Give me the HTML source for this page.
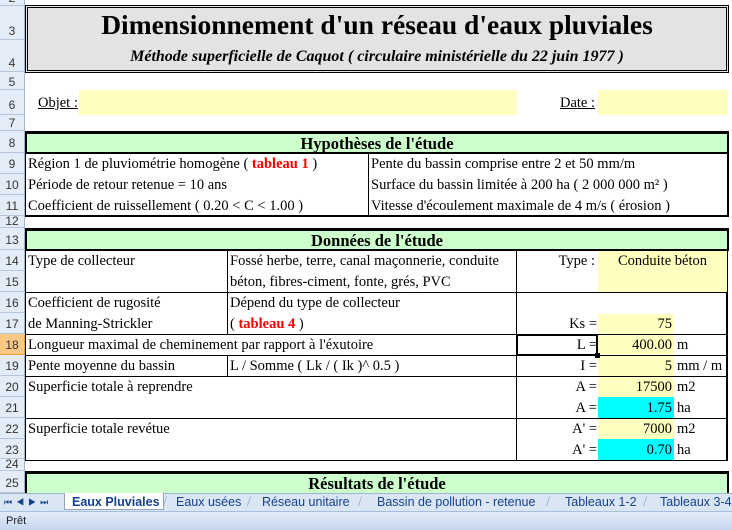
<!DOCTYPE html>
<html><head><meta charset="utf-8"><style>
*{margin:0;padding:0;box-sizing:border-box}
body{width:732px;height:530px;overflow:hidden;background:#fff;position:relative;font-family:"Liberation Serif",serif;font-size:14.5px;color:#000}
.a{position:absolute}
.rh{position:absolute;left:0;width:25px;background:#e4ecf7;border-bottom:1px solid #b5c6dd;border-right:1px solid #9eb6ce;font-family:"Liberation Sans",sans-serif;font-size:12px;color:#333;text-align:center;display:flex;align-items:flex-end;justify-content:center;padding-bottom:1px;overflow:hidden;line-height:12px}
.t{position:absolute;white-space:nowrap;line-height:16px}
.r{text-align:right}
.red{color:#f00;font-weight:bold}
.hl{background:#ccffcc;border:2px solid #000;border-top:3px solid #000;font-weight:bold;font-size:16.5px;text-align:center;line-height:18px}
.y{background:#ffffc0}
.c{background:#00ffff}
.bl{border-left:1px solid #000}
.bt{border-top:1px solid #000}
</style></head><body>
<div class="rh" style="top:0;height:6px">2</div>
<div class="rh" style="top:6px;height:34px;padding-bottom:2px">3</div>
<div class="rh" style="top:40px;height:32px;padding-bottom:2px">4</div>
<div class="rh" style="top:72px;height:18px">5</div>
<div class="rh" style="top:90px;height:25px;padding-bottom:3px">6</div>
<div class="rh" style="top:115px;height:16px">7</div>
<div class="rh" style="top:131px;height:22px;padding-bottom:3px">8</div>
<div class="rh" style="top:153px;height:21px;padding-bottom:3px">9</div>
<div class="rh" style="top:174px;height:21px;padding-bottom:3px">10</div>
<div class="rh" style="top:195px;height:21px;padding-bottom:3px">11</div>
<div class="rh" style="top:216px;height:12px;padding-bottom:0">12</div>
<div class="rh" style="top:228px;height:22px;padding-bottom:3px">13</div>
<div class="rh" style="top:250px;height:21px;padding-bottom:3px">14</div>
<div class="rh" style="top:271px;height:21px;padding-bottom:3px">15</div>
<div class="rh" style="top:292px;height:21px;padding-bottom:3px">16</div>
<div class="rh" style="top:313px;height:21px;padding-bottom:3px">17</div>
<div class="rh" style="top:334px;height:21px;padding-bottom:3px;background:#f9c883;border-color:#e8a040">18</div>
<div class="rh" style="top:355px;height:21px;padding-bottom:3px">19</div>
<div class="rh" style="top:376px;height:21px;padding-bottom:3px">20</div>
<div class="rh" style="top:397px;height:21px;padding-bottom:3px">21</div>
<div class="rh" style="top:418px;height:21px;padding-bottom:3px">22</div>
<div class="rh" style="top:439px;height:20px;padding-bottom:2px">23</div>
<div class="rh" style="top:459px;height:12px;padding-bottom:0">24</div>
<div class="rh" style="top:471px;height:22px;padding-bottom:3px">25</div>

<div class="a" style="left:25px;top:5px;width:704px;height:68px;border:3px double #000;background:#e3e3e3"></div>
<div class="t" style="left:25px;width:704px;top:9px;text-align:center;font-size:27.5px;font-weight:bold;line-height:32px">Dimensionnement d'un réseau d'eaux pluviales</div>
<div class="t" style="left:25px;width:704px;top:49px;text-align:center;font-size:16px;font-weight:bold;font-style:italic">Méthode superficielle de Caquot ( circulaire ministérielle du 22 juin 1977 )</div>

<div class="t" style="left:38px;top:95px;text-decoration:underline">Objet :</div>
<div class="a y" style="left:79px;top:90px;width:438px;height:25px"></div>
<div class="t" style="left:560px;top:95px;text-decoration:underline">Date :</div>
<div class="a y" style="left:598px;top:90px;width:130px;height:25px"></div>

<div class="a hl" style="left:25px;top:131px;width:704px;height:23px;padding-top:1px">Hypothèses de l'étude</div>
<div class="a" style="left:25px;top:153px;width:704px;height:64px;border:1px solid #000;border-right:2px solid #000;border-bottom:2px solid #000"></div>
<div class="a bl" style="left:368px;top:153px;height:63px"></div>
<div class="t" style="left:28px;top:156px">Région 1 de pluviométrie homogène ( <span class="red">tableau 1</span> )</div>
<div class="t" style="left:28px;top:177px">Période de retour retenue = 10 ans</div>
<div class="t" style="left:28px;top:198px">Coefficient de ruissellement ( 0.20 &lt; C &lt; 1.00 )</div>
<div class="t" style="left:371px;top:156px">Pente du bassin comprise entre 2 et 50 mm/m</div>
<div class="t" style="left:371px;top:177px">Surface du bassin limitée à 200 ha ( 2 000 000 m² )</div>
<div class="t" style="left:371px;top:198px">Vitesse d'écoulement maximale de 4 m/s ( érosion )</div>

<div class="a hl" style="left:25px;top:228px;width:704px;height:23px;padding-top:1px">Données de l'étude</div>
<div class="a" style="left:25px;top:250px;width:703px;height:211px;border-left:1px solid #000;border-right:2px solid #000;border-bottom:1px solid #000"></div>
<div class="a bl" style="left:227px;top:250px;height:84px"></div>
<div class="a bl" style="left:227px;top:355px;height:21px"></div>
<div class="a bl" style="left:516px;top:250px;height:126px"></div>
<div class="a bt" style="left:25px;top:292px;width:703px"></div>
<div class="a bt" style="left:25px;top:334px;width:703px"></div>
<div class="a bt" style="left:25px;top:355px;width:703px"></div>
<div class="a bt" style="left:25px;top:376px;width:703px"></div>
<div class="a bt" style="left:25px;top:418px;width:703px"></div>
<div class="a bl" style="left:516px;top:376px;height:85px"></div>

<div class="a y" style="left:598px;top:251px;width:129px;height:41px"></div>
<div class="a y" style="left:598px;top:314px;width:76px;height:20px"></div>
<div class="a y" style="left:598px;top:335px;width:76px;height:20px"></div>
<div class="a y" style="left:598px;top:356px;width:76px;height:20px"></div>
<div class="a y" style="left:598px;top:377px;width:76px;height:20px"></div>
<div class="a c" style="left:598px;top:397px;width:76px;height:21px"></div>
<div class="a y" style="left:598px;top:419px;width:76px;height:20px"></div>
<div class="a c" style="left:598px;top:439px;width:76px;height:21px"></div>
<div class="a" style="left:516px;top:334px;width:82px;height:22px;border:2px solid #000"></div>
<div class="a" style="left:595px;top:353px;width:5px;height:5px;background:#000"></div>

<div class="t" style="left:28px;top:253px">Type de collecteur</div>
<div class="t" style="left:230px;top:253px">Fossé herbe, terre, canal maçonnerie, conduite</div>
<div class="t" style="left:230px;top:274px">béton, fibres-ciment, fonte, grés, PVC</div>
<div class="t r" style="right:137px;top:253px">Type :</div>
<div class="t" style="left:598px;width:129px;top:253px;text-align:center">Conduite béton</div>
<div class="t" style="left:28px;top:295px">Coefficient de rugosité</div>
<div class="t" style="left:28px;top:316px">de Manning-Strickler</div>
<div class="t" style="left:230px;top:295px">Dépend du type de collecteur</div>
<div class="t" style="left:230px;top:316px">( <span class="red">tableau 4</span> )</div>
<div class="t r" style="right:135px;top:316px">Ks =</div>
<div class="t r" style="right:60px;top:316px">75</div>
<div class="t" style="left:28px;top:337px">Longueur maximal de cheminement par rapport à l'éxutoire</div>
<div class="t r" style="right:135px;top:337px">L =</div>
<div class="t r" style="right:60px;top:337px">400.00</div><div class="t" style="left:677px;top:337px">m</div>
<div class="t" style="left:28px;top:358px">Pente moyenne du bassin</div>
<div class="t" style="left:230px;top:358px">L / Somme ( Lk / ( Ik )^ 0.5 )</div>
<div class="t r" style="right:135px;top:358px">I =</div>
<div class="t r" style="right:60px;top:358px">5</div><div class="t" style="left:677px;top:358px">mm / m</div>
<div class="t" style="left:28px;top:379px">Superficie totale à reprendre</div>
<div class="t r" style="right:135px;top:379px">A =</div>
<div class="t r" style="right:60px;top:379px">17500</div><div class="t" style="left:677px;top:379px">m2</div>
<div class="t r" style="right:135px;top:400px">A =</div>
<div class="t r" style="right:60px;top:400px">1.75</div><div class="t" style="left:677px;top:400px">ha</div>
<div class="t" style="left:28px;top:421px">Superficie totale revétue</div>
<div class="t r" style="right:135px;top:421px">A' =</div>
<div class="t r" style="right:60px;top:421px">7000</div><div class="t" style="left:677px;top:421px">m2</div>
<div class="t r" style="right:135px;top:442px">A' =</div>
<div class="t r" style="right:60px;top:442px">0.70</div><div class="t" style="left:677px;top:442px">ha</div>

<div class="a hl" style="left:25px;top:471px;width:704px;height:24px;padding-top:1px;border-bottom:none">Résultats de l'étude</div>

<div class="a" style="left:0;top:493px;width:732px;height:18px;background:#dbe6f4;border-top:1px solid #9eb6ce"></div>
<div class="t" style="left:4px;top:494px;font-family:'Liberation Sans',sans-serif;font-size:9px;color:#15428b;letter-spacing:4px">⏮◀▶⏭</div>
<div class="a" style="left:64px;top:493px;width:100px;height:17px;background:#fff;border:1px solid #8ea4c1;border-top:none"></div>
<div class="t" style="left:72px;top:494px;font-family:'Liberation Sans',sans-serif;font-size:12.5px;font-weight:bold;color:#15428b">Eaux Pluviales</div>
<div class="t" style="left:176px;top:494px;font-family:'Liberation Sans',sans-serif;font-size:12.5px;color:#15428b">Eaux usées</div>
<div class="t" style="left:262px;top:494px;font-family:'Liberation Sans',sans-serif;font-size:12.5px;color:#15428b">Réseau unitaire</div>
<div class="t" style="left:377px;top:494px;font-family:'Liberation Sans',sans-serif;font-size:12.5px;color:#15428b">Bassin de pollution - retenue</div>
<div class="t" style="left:565px;top:494px;font-family:'Liberation Sans',sans-serif;font-size:12.5px;color:#15428b">Tableaux 1-2</div>
<div class="t" style="left:660px;top:494px;font-family:'Liberation Sans',sans-serif;font-size:12.5px;color:#15428b">Tableaux 3-4</div>
<div class="t" style="left:163px;top:494px;color:#8ea4c1">/</div>
<div class="t" style="left:247px;top:494px;color:#8ea4c1">/</div>
<div class="t" style="left:358px;top:494px;color:#8ea4c1">/</div>
<div class="t" style="left:546px;top:494px;color:#8ea4c1">/</div>
<div class="t" style="left:643px;top:494px;color:#8ea4c1">/</div>
<div class="a" style="left:0;top:511px;width:732px;height:19px;background:linear-gradient(#e3ecf8,#c5d6ee);border-top:1px solid #a7bedd"></div>
<div class="t" style="left:6px;top:513px;font-family:'Liberation Sans',sans-serif;font-size:11px;color:#222">Prêt</div>
</body></html>
